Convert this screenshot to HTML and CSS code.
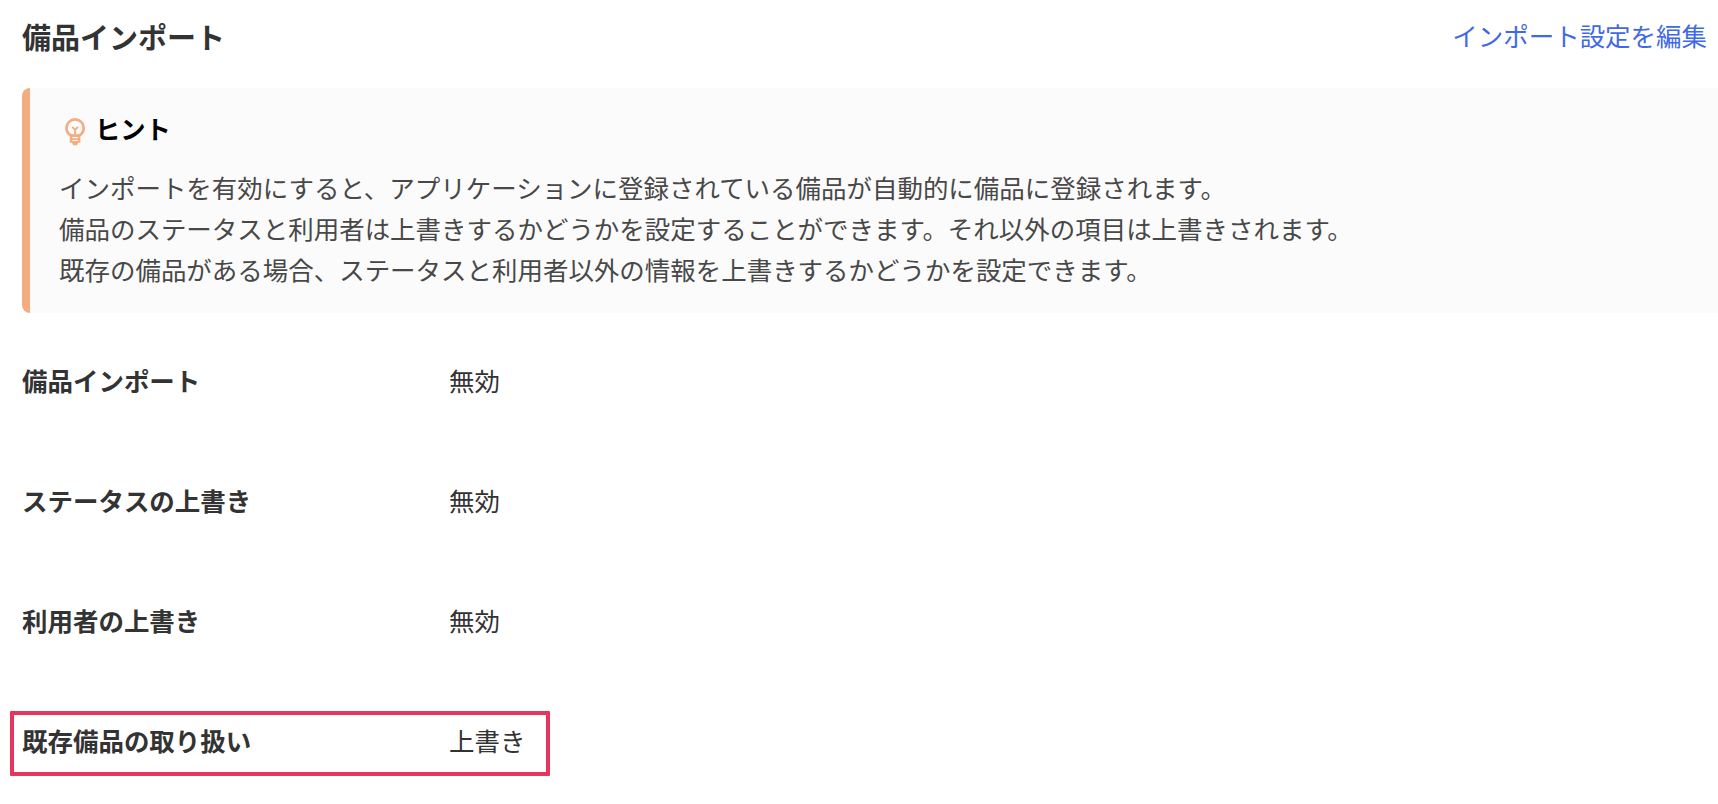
FILE: index.html
```
<!DOCTYPE html>
<html lang="ja">
<head>
<meta charset="utf-8">
<title>備品インポート</title>
<link rel="stylesheet" href="styles.css">
</head>
<body>
<main class="panel">
  <header class="header">
    <h1 class="title">備品インポート</h1>
    <a class="edit">インポート設定を編集</a>
  </header>
  <section class="hint">
    <h2 class="hint-title">
      <svg class="bulb" viewBox="0 0 24 28" fill="none" stroke="currentColor" stroke-width="2.700">
        <path d="M8.200 17.500C5.200 16 3.500 13.300 3.500 10a8.600 8.600 0 0 1 17.200 0c0 3.300-1.700 6-4.700 7.500z"/>
        <path d="M12.100 16.500v-5M9.200 8.800l2.900 3 2.900-3" stroke-width="1.900"/>
        <path d="M6.800 16.500h10.600v8.300h-2.100l-1.300 2.500h-3.800l-1.300-2.500H6.800z" fill="currentColor" stroke="none"/>
        <path class="thread" d="M9.300 19.600h5.600M9.300 22.500h5.600"/>
      </svg>
      <span>ヒント</span>
    </h2>
    <p class="line">インポートを有効にすると、アプリケーションに登録されている備品が自動的に備品に登録されます。</p>
    <p class="line">備品のステータスと利用者は上書きするかどうかを設定することができます。それ以外の項目は上書きされます。</p>
    <p class="line">既存の備品がある場合、ステータスと利用者以外の情報を上書きするかどうかを設定できます。</p>
  </section>
  <dl class="settings">
    <div class="row"><dt>備品インポート</dt><dd>無効</dd></div>
    <div class="row"><dt>ステータスの上書き</dt><dd>無効</dd></div>
    <div class="row"><dt>利用者の上書き</dt><dd>無効</dd></div>
    <div class="row marked"><dt>既存備品の取り扱い</dt><dd>上書き</dd></div>
  </dl>
</main>
</body>
</html>
```
FILE: styles.css
```
* { box-sizing: border-box; }
body, h1, h2, p, dl, dt, dd { margin: 0; }
body {
  font-family: "Liberation Sans", "Noto Sans CJK JP", sans-serif;
  font-size: 25.48px;
  color: #333;
  background: #fff;
  overflow: hidden;
}
.panel { padding-left: 22px; }
.header {
  display: flex;
  justify-content: space-between;
  align-items: center;
  height: 88px;
  padding: 0 11px 18px 0;
}
.title { padding-top: 2px; font-size: 29px; }
.edit { padding-bottom: 1px; color: #3f69e8; }
.hint {
  height: 225px;
  padding: 19px 0 0 29px;
  border-left: 8px solid #f4ad80;
  border-radius: 8px 0 0 8px;
  background: #fbfbfb;
}
.hint-title {
  display: flex;
  align-items: center;
  height: 42px;
  margin-bottom: 20px;
  padding-left: 4px;
  gap: 8px;
  font-size: 25.3px;
  color: #000;
}
.bulb { width: 24px; height: 28px; margin-top: 8px; color: #f4ad80; }
.thread { stroke: #fbfbfb; stroke-width: 1.2; }
.line { height: 41px; line-height: 41px; white-space: nowrap; color: #484848; }
.settings { padding-top: 38px; }
.row {
  display: grid;
  grid-template-columns: 427px auto;
  align-items: center;
  height: 65px;
  margin-bottom: 55px;
  padding-bottom: 8px;
}
dt { font-weight: 700; }
.marked {
  width: 540px;
  margin-left: -12px;
  padding-left: 8px;
  border: 4px solid #e6365d;
  border-radius: 1px;
}
```
